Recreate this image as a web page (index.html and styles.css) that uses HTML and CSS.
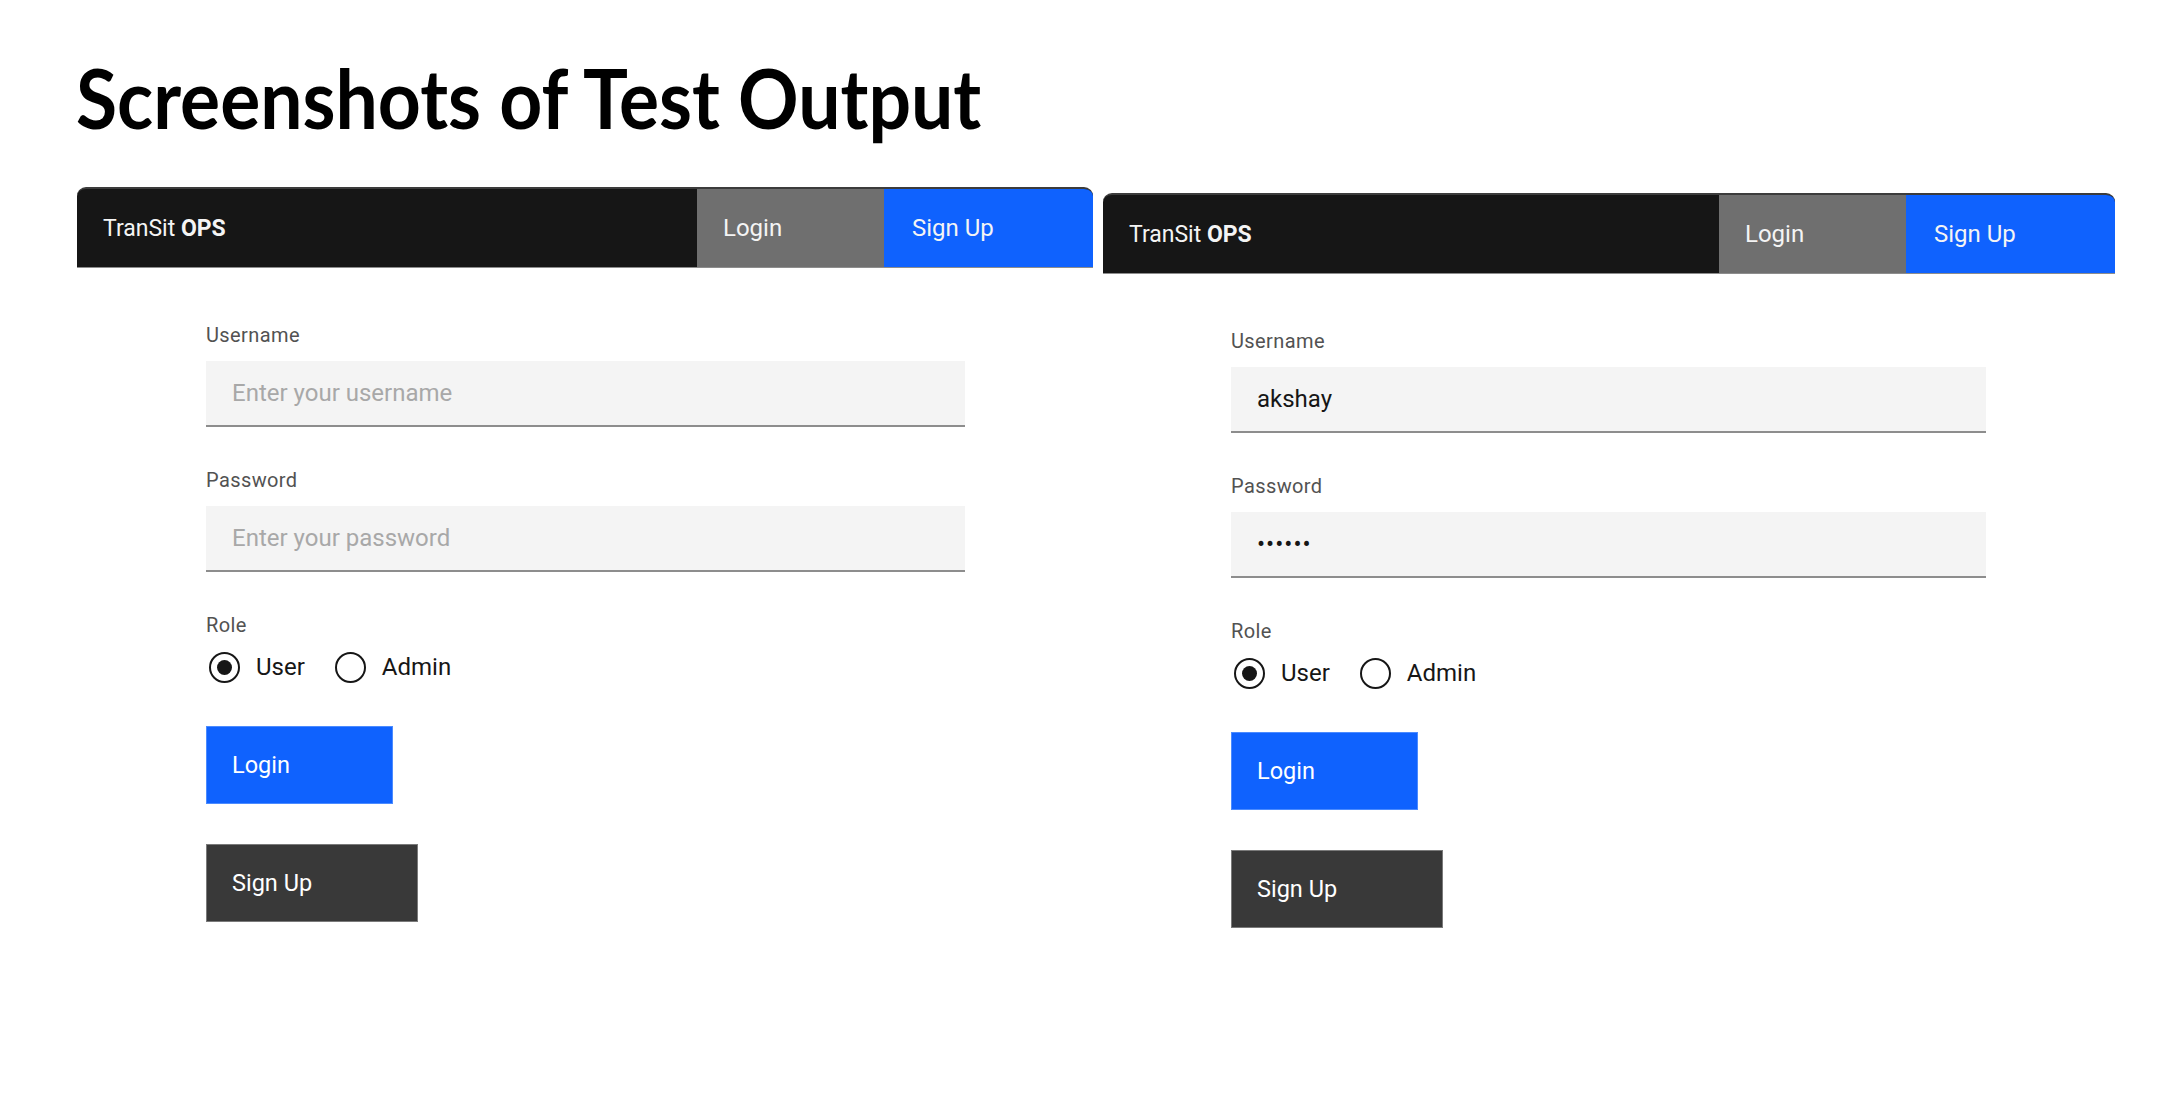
FILE: index.html
```html
<!DOCTYPE html>
<html lang="en">
<head>
<meta charset="utf-8">
<title>Screenshots of Test Output</title>
<link rel="stylesheet" href="styles.css">
</head>
<body>
<main class="slide">
  <h1 class="title">Screenshots of Test Output</h1>
  <div class="shots">
    <section class="shot">
      <header class="app-header">
        <div class="brand">TranSit&nbsp;<b>OPS</b></div>
        <a class="nav-tab tab-login">Login</a>
        <a class="nav-tab tab-signup">Sign Up</a>
      </header>
      <form class="form">
        <div class="field">
          <label class="label">Username</label>
          <input class="input" type="text" placeholder="Enter your username">
        </div>
        <div class="field">
          <label class="label">Password</label>
          <input class="input" type="password" placeholder="Enter your password">
        </div>
        <div class="role">
          <div class="label role-label">Role</div>
          <div class="radios">
            <label class="radio-option"><input class="radio" type="radio" name="role1" checked><span>User</span></label>
            <label class="radio-option"><input class="radio" type="radio" name="role1"><span>Admin</span></label>
          </div>
        </div>
        <div class="actions">
          <button type="button" class="btn btn-primary">Login</button>
          <button type="button" class="btn btn-secondary">Sign Up</button>
        </div>
      </form>
    </section>
    <section class="shot shot--second">
      <header class="app-header">
        <div class="brand">TranSit&nbsp;<b>OPS</b></div>
        <a class="nav-tab tab-login">Login</a>
        <a class="nav-tab tab-signup">Sign Up</a>
      </header>
      <form class="form form--second">
        <div class="field">
          <label class="label">Username</label>
          <input class="input" type="text" value="akshay" placeholder="Enter your username">
        </div>
        <div class="field">
          <label class="label">Password</label>
          <input class="input input--password" type="password" value="akshay" placeholder="Enter your password">
        </div>
        <div class="role">
          <div class="label role-label">Role</div>
          <div class="radios">
            <label class="radio-option"><input class="radio" type="radio" name="role2" checked><span>User</span></label>
            <label class="radio-option"><input class="radio" type="radio" name="role2"><span>Admin</span></label>
          </div>
        </div>
        <div class="actions">
          <button type="button" class="btn btn-primary">Login</button>
          <button type="button" class="btn btn-secondary">Sign Up</button>
        </div>
      </form>
    </section>
  </div>
</main>
</body>
</html>
```

FILE: styles.css
```css
* { box-sizing: border-box; }

body {
  margin: 0;
  background: #ffffff;
  font-family: Roboto, "Liberation Sans", sans-serif;
  color: #161616;
}

.slide {
  padding-top: 56px;
}

.title {
  margin: 0 0 49px 76px;
  font-family: Lato, "Open Sans", sans-serif;
  font-weight: 700;
  font-size: 82px;
  line-height: 82px;
  color: #000;
  transform: scaleX(0.915);
  transform-origin: left center;
}

.shots {
  display: flex;
  align-items: flex-start;
  gap: 10px;
  padding-left: 77px;
}

.shot { width: 1016px; }
.shot--second { width: 1012px; margin-top: 6px; }

/* header */
.app-header {
  display: flex;
  height: 81px;
  background: #161616;
  border-top: 2px solid #3c3c3c;
  border-bottom: 1px solid #8d8d8d;
  border-radius: 9px 9px 0 0;
  overflow: hidden;
}

.brand {
  flex: 1;
  display: flex;
  align-items: center;
  padding-left: 26px;
  color: #f4f4f4;
  font-size: 23px;
}
.brand b { font-weight: 700; }

.nav-tab {
  display: flex;
  align-items: center;
  padding-left: 26px;
  color: #f4f4f4;
  font-size: 24px;
}
.tab-login { width: 187px; background: #6f6f6f; }
.tab-signup { width: 209px; background: #0f62fe; padding-left: 28px; }

/* form */
.form {
  display: flex;
  flex-direction: column;
  align-items: flex-start;
  width: 759px;
  margin-left: 129px;
  padding-top: 54px;
}
.form--second { width: 755px; margin-left: 128px; }

.field {
  display: flex;
  flex-direction: column;
  gap: 13px;
  width: 100%;
  margin-bottom: 40px;
}

.label {
  font-size: 20px;
  line-height: 26px;
  letter-spacing: 0.4px;
  color: #525252;
}

.input {
  width: 100%;
  height: 66px;
  margin: 0;
  padding: 0 26px;
  border: none;
  border-bottom: 2px solid #8d8d8d;
  background: #f4f4f4;
  font-family: Roboto, "Liberation Sans", sans-serif;
  font-size: 24px;
  color: #161616;
  outline: none;
}
.input::placeholder { color: #a8a8a8; }
.input--password { letter-spacing: 1px; }

.role-label { margin-bottom: 13px; }

.radios {
  display: flex;
  align-items: center;
  gap: 27px;
  height: 32px;
}

.radio-option {
  display: flex;
  align-items: center;
  gap: 16px;
  font-size: 24px;
  color: #161616;
}

.radio {
  appearance: none;
  -webkit-appearance: none;
  width: 31px;
  height: 31px;
  margin: 0 0 0 3px;
  border: 2px solid #161616;
  border-radius: 50%;
  display: grid;
  place-content: center;
  background: #fff;
}
.radio:checked::before {
  content: "";
  width: 15px;
  height: 15px;
  border-radius: 50%;
  background: #161616;
}

.actions {
  display: flex;
  flex-direction: column;
  align-items: flex-start;
  gap: 40px;
  margin-top: 43px;
}

.btn {
  height: 78px;
  margin: 0;
  padding: 0 0 0 25px;
  border: 1px solid transparent;
  font-family: Roboto, "Liberation Sans", sans-serif;
  font-size: 23.5px;
  color: #ffffff;
  text-align: left;
}
.btn-primary { width: 187px; background: #0f62fe; border-color: #4b8bff; }
.btn-secondary { width: 212px; background: #393939; border-color: #7a7a7a; }
```
